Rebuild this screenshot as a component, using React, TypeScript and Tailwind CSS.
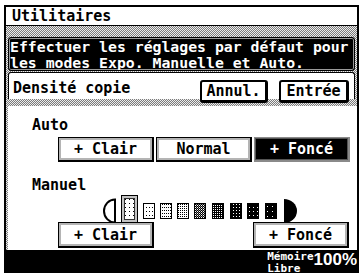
import React from 'react';

const mono = "font-['DejaVu_Sans_Mono',monospace] font-bold";
const checker =
  'bg-[image:repeating-conic-gradient(#7c7c7c_0_25%,#ececec_0_50%)] bg-[length:2px_2px]';

type BtnProps = {
  label: string;
  active?: boolean;
  className?: string;
};

const PanelButton = ({ label, active, className = '' }: BtnProps) => (
  <button
    type="button"
    className={`flex items-center justify-center border border-r-2 border-b-2 text-[15px] leading-[18px] ${
      active
        ? 'border-[#8a8a8a] bg-black text-white shadow-[inset_0_0_0_1px_#555]'
        : 'border-black bg-white text-black shadow-[inset_0_0_0_2px_#b4b4b4]'
    } ${mono} ${className}`}
  >
    {label}
  </button>
);

const CornerButton = ({ label, className = '' }: BtnProps) => (
  <button
    type="button"
    className={`flex h-[23px] items-center justify-center rounded-[3px] border-2 border-r-[3px] border-b-[3px] border-black bg-white text-[15px] leading-[18px] text-black ${mono} ${className}`}
  >
    {label}
  </button>
);

// density scale: 9 steps, first one selected
const DensityScale = () => {
  const boxes = [43, 60, 77, 94, 112, 130, 147, 165];
  const fills = ['p2', 'p3', 'p4', 'p5', 'p6', 'p7', 'p8', 'p9'];
  return (
    <svg width="200" height="30" viewBox="0 0 200 30" className="block">
      <defs>
        <pattern id="p1" width="4" height="4" patternUnits="userSpaceOnUse">
          <rect width="4" height="4" fill="#fff" />
          <rect x="1" y="1" width="1" height="1" fill="#000" />
        </pattern>
        <pattern id="p2" width="3" height="4" patternUnits="userSpaceOnUse">
          <rect width="3" height="4" fill="#fff" />
          <rect x="1" y="1" width="1" height="1" fill="#000" />
        </pattern>
        <pattern id="p3" width="2" height="3" patternUnits="userSpaceOnUse">
          <rect width="2" height="3" fill="#fff" />
          <rect x="0" y="1" width="1" height="1" fill="#000" />
        </pattern>
        <pattern id="p4" width="2" height="2" patternUnits="userSpaceOnUse">
          <rect width="2" height="2" fill="#fff" />
          <rect x="0" y="0" width="1" height="1" fill="#000" />
        </pattern>
        <pattern id="p5" width="2" height="2" patternUnits="userSpaceOnUse">
          <rect width="2" height="2" fill="#000" />
          <rect x="1" y="1" width="1" height="1" fill="#fff" />
          <rect x="0" y="0" width="1" height="1" fill="#8a8a8a" />
        </pattern>
        <pattern id="p6" width="2" height="2" patternUnits="userSpaceOnUse">
          <rect width="2" height="2" fill="#000" />
          <rect x="1" y="1" width="1" height="1" fill="#fff" />
        </pattern>
        <pattern id="p7" width="3" height="3" patternUnits="userSpaceOnUse">
          <rect width="3" height="3" fill="#000" />
          <rect x="1" y="1" width="1" height="1" fill="#fff" />
        </pattern>
        <pattern id="p8" width="4" height="4" patternUnits="userSpaceOnUse">
          <rect width="4" height="4" fill="#000" />
          <rect x="1" y="1" width="1" height="1" fill="#fff" />
        </pattern>
        <pattern id="p9" width="5" height="5" patternUnits="userSpaceOnUse">
          <rect width="5" height="5" fill="#000" />
          <rect x="2" y="2" width="1" height="1" fill="#fff" />
        </pattern>
      </defs>
      {/* light end */}
      <path d="M15 5.5 A11 11.5 0 0 0 15 28.5 Z" fill="#fff" stroke="#000" strokeWidth="2" />
      {/* selected step */}
      <rect x="21.5" y="1.5" width="16" height="27" fill="#c4c4c4" stroke="#000" />
      <rect x="24.5" y="4.5" width="10" height="21" fill="url(#p1)" stroke="#333" />
      {boxes.map((x, i) => (
        <rect key={x} x={x + 0.5} y="9.5" width="11" height="15" fill={`url(#${fills[i]})`} stroke="#000" />
      ))}
      {/* dark end */}
      <path d="M184 5 A13 12 0 0 1 184 29 Z" fill="#000" />
    </svg>
  );
};

export default function App() {
  return (
    <div className="h-[273px] w-[362px] overflow-hidden bg-white pt-[5px] pl-[4px]">
      <div className="flex h-[268px] w-[355px] flex-col border-x-2 border-t-2 border-black">
        <div className={`h-[19px] border-b border-black bg-white pl-[6px] text-[15px] leading-[18px] text-black ${mono}`}>
          Utilitaires
        </div>

        <div className={`flex flex-col px-[2px] pt-[11px] ${checker}`}>
          <div
            className={`h-[34px] overflow-hidden rounded-[3px] border border-black bg-black pt-[1px] pl-[1px] text-[14.8px] leading-[16px] whitespace-nowrap text-white shadow-[inset_0_0_0_1px_#9a9a9a] ${mono}`}
          >
            <p>Effectuer les réglages par défaut pour</p>
            <p>les modes Expo. Manuelle et Auto.</p>
          </div>

          <div className="mt-[1px] flex h-[27px] items-start justify-between rounded-t-[3px] border border-b-0 border-black bg-white pl-[4px] pr-[5px]">
            <span className={`pt-[6px] text-[15px] leading-[18px] text-black ${mono}`}>Densité copie</span>
            <div className="relative z-10 mt-[7px] flex gap-[11px]">
              <CornerButton label="Annul." className="w-[68px]" />
              <CornerButton label="Entrée" className="w-[70px]" />
            </div>
          </div>
          <div className="h-[7px]" />
        </div>

        <div className="flex h-[144px]">
          <div className={`w-[2px] ${checker}`} />
          <div className="flex flex-1 flex-col bg-white">
            <p className={`pt-[10px] pl-[24px] text-[15px] leading-[18px] text-black ${mono}`}>Auto</p>
            <div className="mt-[3px] ml-[50px] flex gap-[2px]">
              <PanelButton label="+ Clair" className="h-[25px] w-[96px]" />
              <PanelButton label="Normal" className="h-[25px] w-[96px]" />
              <PanelButton label="+ Foncé" active className="h-[25px] w-[96px]" />
            </div>

            <p className={`mt-[14px] pl-[24px] text-[15px] leading-[18px] text-black ${mono}`}>Manuel</p>
            <div className="ml-[92px] h-[28px]">
              <DensityScale />
            </div>
            <div className="ml-[50px] flex w-[291px] justify-between">
              <PanelButton label="+ Clair" className="h-[26px] w-[96px]" />
              <PanelButton label="+ Foncé" className="h-[26px] w-[96px]" />
            </div>
          </div>
        </div>

        <div className="flex h-[23px] items-start justify-end overflow-hidden bg-black text-white">
          <div className={`mt-[1px] flex flex-col text-[11px] leading-[12px] ${mono}`}>
            <span>Mémoire</span>
            <span>Libre</span>
          </div>
          <span className="mt-[1px] font-['Liberation_Sans',sans-serif] text-[17px] leading-[18px] font-bold">100%</span>
        </div>
      </div>
    </div>
  );
}
